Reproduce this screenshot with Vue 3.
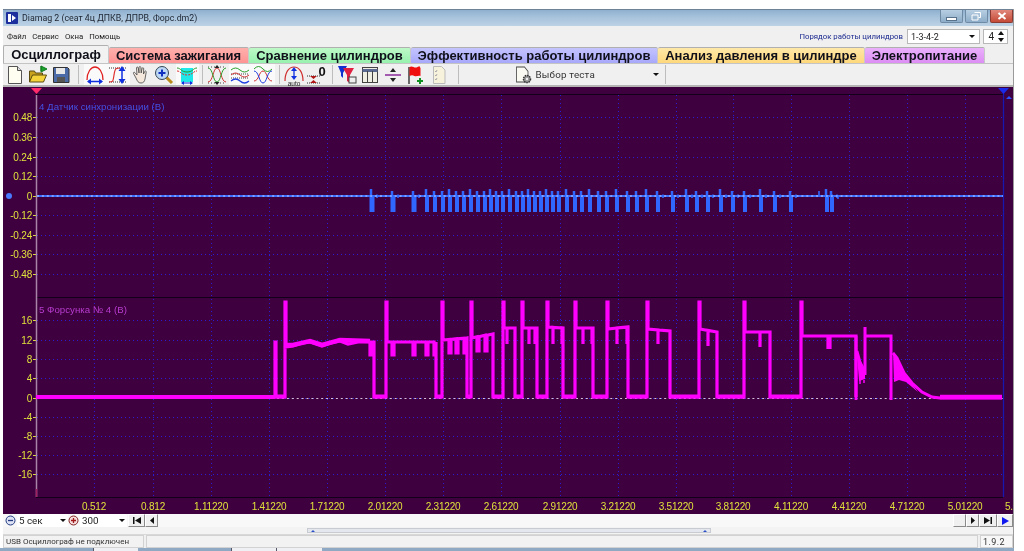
<script setup>
const vGrid = [94,153,211,269,327,385,443,501,560,618,676,733,791,849,907,965]
const xLabels = ['0.512','0.812','1.11220','1.41220','1.71220','2.01220','2.31220','2.61220','2.91220','3.21220','3.51220','3.81220','4.11220','4.41220','4.71220','5.01220']
const yTop = [[117,'0.48'],[137,'0.36'],[157,'0.24'],[176,'0.12'],[196,'0'],[215,'-0.12'],[235,'-0.24'],[254,'-0.36'],[274,'-0.48']]
const yBot = [[320,'16'],[340,'12'],[359,'8'],[378,'4'],[398,'0'],[417,'-4'],[436,'-8'],[455,'-12'],[474,'-16']]

const spikes = [372,393,414,427,435,443,450,457,464,471,478,485,491,497,503,510,517,523,529,535,541,547,553,559,567,575,582,590,599,607,617,628,637,647,658,673,687,697,708,721,733,745,761,775,791,827,832]
const spikeDown = spikes.slice(3).map(x => `M${x} 196V212`).join('')
const wideDown = spikes.slice(0, 3).map(x => `M${x} 196V212`).join('')
const spikeUp = spikes.map((x, i) => `M${x - 1} 196V${i % 3 === 0 ? 189 : 191}`).join('')
const blips = spikes.filter(x => x < 425 || x > 650).map(x => `M${x + 5} 194.500V198`).join('') + 'M819 191V197M838 196V199'

const pulses = [
  [386,436,342,342,355,[393,414,427,435]],
  [442,467,340,338,353,[450,457,465]],
  [471,493,338,334,351,[478,486]],
  [503,515,328,328,344,[507]],
  [522,537,328,328,344,[529,535]],
  [547,563,327,328,344,[553,562]],
  [575,593,328,328,344,[583,592]],
  [607,628,329,327,344,[617,627]],
  [647,670,329,331,344,[658]],
  [699,717,329,332,346,[708]],
  [744,770,332,332,347,[760]],
  [801,856,336,336,349,[828,830]]
]
let d = 'M36 397L275 397V342H276V397H285V302H286V347L293 346L302 343L310 342L322 346L331 343L340 341L348 344L358 342L370 342V355H372V342L374 342V397H386'
let b = 'M275 396.500H285M374 396.500H386'
pulses.forEach((p, i) => {
  const [x, end, t0, t1, dy, drops] = p
  const half = x < 500 ? 1 : 0
  d += `V302H${x + 1}V${t0}`
  drops.forEach(c => {
    const t = t0 + (t1 - t0) * (c - x) / (end - x)
    d += `L${c - half} ${t.toFixed(1)}V${dy}H${c + half}V${t.toFixed(1)}`
  })
  d += `L${end} ${t1}V397`
  const next = pulses[i + 1]
  if (next) {
    d += `H${next[0]}`
    b += `M${end} 396.500H${next[0]}`
  }
})
const magenta = d
const baseline = b
</script>

<template>
  <div class="screen">
    <div class="window">
      <header class="titlebar">
        <svg class="appicon" width="12" height="12" viewBox="0 0 12 12"><rect width="12" height="12" rx="1" fill="#1c2f9c"/><path d="M2 2h3v8H2zM6 3l4 3-4 3z" fill="#fff"/></svg>
        <span class="title">Diamag 2 (сеат 4ц ДПКВ, ДПРВ, Форс.dm2)</span>
        <div class="winbtns">
          <span class="wb min"><i></i></span>
          <span class="wb max"><svg width="11" height="9" viewBox="0 0 11 9"><path d="M3.500.5h6v5h-2M1 3h6v5H1z" fill="none" stroke="#fff"/></svg></span>
          <span class="wb close"><svg width="10" height="8" viewBox="0 0 10 8"><path d="M1.500 1l7 6M8.500 1l-7 6" stroke="#fff" stroke-width="2"/></svg></span>
        </div>
      </header>

      <div class="menubar">
        <nav class="menu"><span>Файл</span><span>Сервис</span><span>Окна</span><span>Помощь</span></nav>
        <div class="order">
          <span class="orderlabel">Порядок работы цилиндров</span>
          <span class="combo ordercombo"><span>1-3-4-2</span><i class="arrow"></i></span>
          <span class="combo spin"><span>4</span><svg width="6" height="11" viewBox="0 0 6 11"><path d="M0 4h6L3 0zM0 7h6l-3 4z" fill="#111"/></svg></span>
        </div>
      </div>

      <div class="tabs">
        <span class="tab t1">Осциллограф</span>
        <span class="tab t2">Система зажигания</span>
        <span class="tab t3">Сравнение цилиндров</span>
        <span class="tab t4">Эффективность работы цилиндров</span>
        <span class="tab t5">Анализ давления в цилиндре</span>
        <span class="tab t6">Электропитание</span>
      </div>

      <div class="toolbar">
        <span class="tb"><svg viewBox="0 0 20 20"><path d="M3.500 1.500h9l4 4v13h-13z" fill="#fffef0" stroke="#555"/><path d="M12.500 1.500v4h4" fill="#ddd" stroke="#555"/></svg></span>
        <span class="tb"><svg viewBox="0 0 20 20"><path d="M1.500 17V6h5l1 2h7v3" fill="#c9a21e" stroke="#5a4a10"/><path d="M1.500 17l3-7h14l-3 7z" fill="#f4d33a" stroke="#5a4a10"/><path d="M13 1v5M13 1l6 3-6 3z" fill="#1aa52e" stroke="#127a20"/></svg></span>
        <span class="tb"><svg viewBox="0 0 20 20"><path d="M2.500 2.500h14l1.500 1.500v13.500h-15.500z" fill="#4a6aa8" stroke="#333"/><rect x="5" y="3" width="9" height="6" fill="#e8e8e8"/><rect x="6" y="12" width="8" height="5" fill="#555"/></svg></span>
        <span class="sep s11"></span>
        <span class="tb on"><svg viewBox="0 0 20 20"><path d="M2 15C2 7 6 2 10 2s8 5 8 13" fill="none" stroke="#e02020" stroke-width="1.300"/><path d="M3 16.500h14" stroke="#1030e0" stroke-width="1.500"/><path d="M2 16.500l4-3v6zM18 16.500l-4-3v6z" fill="#1030e0"/></svg></span>
        <span class="tb on"><svg viewBox="0 0 20 20"><path d="M1 3h18" stroke="#333" stroke-dasharray="1 1"/><path d="M1 17h18" stroke="#333" stroke-dasharray="1 1"/><path d="M1 17c4 0 4 0 5-7s2-7 6-7" fill="none" stroke="#e03030" stroke-width="1.200"/><path d="M14 4v12" stroke="#1030e0" stroke-width="1.500"/><path d="M14 1l-3.500 5h7zM14 19l-3.500-5h7z" fill="#1030e0"/></svg></span>
        <span class="tb"><svg viewBox="0 0 20 20"><path d="M5 13L2.500 8.500c-.6-1 .7-1.700 1.400-.9L6 10 5.500 3c0-1.300 1.600-1.300 1.800 0L8 8V2.500c0-1.300 1.800-1.300 1.900 0L10.200 8l.8-4.500c.3-1.200 1.800-1 1.700.3L12.500 9l1.200-2.500c.5-1 1.800-.5 1.500.6L14 14c-.5 2.500-1.500 4-4 4-2.800 0-3.800-2-5-5z" fill="#f4e8dc" stroke="#444" stroke-width=".8"/></svg></span>
        <span class="tb"><svg viewBox="0 0 20 20"><path d="M12 12l6 6" stroke="#b88a1a" stroke-width="3"/><circle cx="8" cy="8" r="6.500" fill="#bcd8f4" stroke="#345"/><path d="M4.500 8h7M8 4.500v7" stroke="#1030c0" stroke-width="2"/></svg></span>
        <span class="tb on"><svg viewBox="0 0 20 20"><rect x="4" y="3" width="12" height="14" fill="#20e8e8"/><path d="M0 3c4 0 4 4 10 4s6-4 10-4" fill="none" stroke="#2a9a2a"/><path d="M0 6c4 0 4 4 10 4s6-4 10-4" fill="none" stroke="#e03030" stroke-dasharray="2 1"/><path d="M5 18h10" stroke="#1030e0"/><path d="M4 18l3-2v4zM16 18l-3-2v4z" fill="#1030e0"/></svg></span>
        <span class="sep s7"></span>
        <span class="tb"><svg viewBox="0 0 20 20"><path d="M1 2h18M1 18h18" stroke="#444" stroke-dasharray="1 2"/><path d="M1 17C6 17 6 3 10 3s4 14 9 14" fill="none" stroke="#d03030"/><path d="M1 3c5 0 5 14 9 14s4-14 9-14" fill="none" stroke="#28a028"/><path d="M10 0l-2.500 3h5zM10 20l-2.500-3h5z" fill="#222"/></svg></span>
        <span class="tb on"><svg viewBox="0 0 20 20"><path d="M1 5q4.500-4 9 0t9 0" fill="none" stroke="#28a028"/><path d="M1 9h18M1 13h18" stroke="#444" stroke-dasharray="1 1"/><path d="M1 10q4.500-4 9 0t9 0" fill="none" stroke="#d03030"/><path d="M1 16q4.500-4 9 0t9 0" fill="none" stroke="#2040e0" stroke-width="1.200"/></svg></span>
        <span class="tb on"><svg viewBox="0 0 20 20"><path d="M1 4q4.500-5 9 0t9 0" fill="none" stroke="#28a028"/><path d="M1 16C6 16 6 6 10 6s4 10 9 10" fill="none" stroke="#d03030"/><path d="M1 6c5 0 5 12 9 12s4-12 9-12" fill="none" stroke="#2040e0"/></svg></span>
        <span class="sep s8"></span>
        <span class="tb"><svg viewBox="0 0 20 20"><path d="M1 16C1 7 5 2 10 2s9 5 9 14" fill="none" stroke="#d03030" stroke-width="1.200"/><path d="M10 4v9" stroke="#1030e0" stroke-width="1.300"/><path d="M10 2l-3 4h6zM10 15l-3-4h6z" fill="#1030e0"/><text x="10" y="20.500" class="auto">auto</text></svg></span>
        <span class="tb"><svg viewBox="0 0 20 20"><path d="M0 11h13M0 18h13" stroke="#333" stroke-dasharray="1 1"/><path d="M3 11h7l-3.500 3zM3 18h7l-3.500-3z" fill="#b01818"/><text x="15" y="11" class="zero">0</text></svg></span>
        <span class="sep s7"></span>
        <span class="tb"><svg viewBox="0 0 20 20"><path d="M1 1h9l-4 7v5l-2-2V8z" fill="#1030d0"/><path d="M6 3h11l-4 7v8l-3-2v-6z" fill="#e02040"/><rect x="12" y="12" width="7" height="6" fill="#eee" stroke="#444"/></svg></span>
        <span class="tb"><svg viewBox="0 0 20 20"><rect x="2.500" y="2.500" width="15" height="15" fill="#f0efe4" stroke="#444"/><path d="M2.500 5.500h15" stroke="#5a6a90" stroke-width="3"/><path d="M7.500 6v11M12.500 6v11" stroke="#444"/></svg></span>
        <span class="tb"><svg viewBox="0 0 20 20"><path d="M2 10h16" stroke="#8a2a9a" stroke-width="1.500"/><path d="M10 3l-3 4h6zM10 17l-3-4h6z" fill="#222"/></svg></span>
        <span class="tb"><svg viewBox="0 0 20 20"><path d="M3 19V2" stroke="#222" stroke-width="1.300"/><path d="M3.500 2c3-2 5 2 8 0s2 0 3 1v8c-2-1-4 1-6 0s-3-1-5 0z" fill="#f01010"/><path d="M14 13v6M11 16h6" stroke="#109020" stroke-width="2"/></svg></span>
        <span class="tb"><svg viewBox="0 0 20 20"><path d="M4.500 1.500h8l3.500 3.500v13.500H4.500z" fill="#f6f2dc" stroke="#bbb"/><path d="M6 6l1 1 1-2M6 10l1 1 1-2M6 14l1 1 1-2" fill="none" stroke="#aaa"/></svg></span>
        <span class="sep s7b"></span>
        <div class="testpick">
          <svg width="18" height="19" viewBox="0 0 18 19"><path d="M1.500 1.500h8l3.500 3.500v8H1.500z" transform="scale(1 1.300)" fill="#fbfaf2" stroke="#444" stroke-width=".8"/><circle cx="12" cy="14" r="3.500" fill="#999" stroke="#333" stroke-width="1.500" stroke-dasharray="1.500 .8"/><circle cx="12" cy="14" r="1.200" fill="#eee"/></svg>
          <span class="testlabel">Выбор теста</span>
          <i class="arrow small"></i>
        </div>
        <span class="sep s0"></span>
      </div>

      <div class="plot">
        <svg class="scope" viewBox="3 87 1010 427" width="1010" height="427">
          <rect x="3" y="87" width="1010" height="427" fill="#3e003e"/>
          <g class="grid">
            <path v-for="x in vGrid" :key="x" :d="`M${x + .5} 95V497`"/>
            <path v-for="r in yTop" :key="r[1]" :d="`M37 ${r[0] + .5}H1003`"/>
            <path v-for="r in yBot" :key="r[1]" :d="`M37 ${r[0] + .5}H1003`"/>
          </g>
          <path d="M36 94.500H1003M36 297.500H1003M36 497.500H1003" stroke="#12001a" stroke-width="1" fill="none"/>
          <g class="ticks">
            <path v-for="r in yTop" :key="r[1]" :d="`M33 ${r[0] + .5}H36`"/>
            <path v-for="r in yBot" :key="r[1]" :d="`M33 ${r[0] + .5}H36`"/>
          </g>
          <path d="M36.500 95V497" stroke="#a884a8" stroke-width="1.500"/>
          <path d="M36.500 489V497" stroke="#a02060" stroke-width="1.500"/>
          <path d="M1003.500 92V497" stroke="#1818b0" stroke-width="1.300"/>
          <path d="M31 88h11l-5.500 6z" fill="#ff2a6a"/>
          <path d="M998 88h11l-5.500 6z" fill="#1a2ae8"/>
          <path d="M1006 99h6l-3-3z" fill="#2a50ff"/>
          <circle cx="9" cy="196" r="3" fill="#4a7aff"/>

          <text v-for="r in yTop" :key="r[1]" :x="32" :y="r[0] + 3.500" class="ylab">{{ r[1] }}</text>
          <text v-for="r in yBot" :key="r[1]" :x="32" :y="r[0] + 3.500" class="ylab">{{ r[1] }}</text>
          <text v-for="(l, i) in xLabels" :key="l" :x="vGrid[i]" y="509.500" class="xlab">{{ l }}</text>
          <text x="1005" y="509.500" class="xlab start">5.</text>

          <text x="39" y="110" class="name blue">4 Датчик синхронизации (В)</text>
          <text x="39" y="313" class="name pink">5 Форсунка № 4 (В)</text>

          <path d="M37 196H1003" stroke="#3a6cff" stroke-width="2.200"/>
          <path :d="wideDown" stroke="#3068ff" stroke-width="5" fill="none"/>
          <path :d="spikeDown" stroke="#3068ff" stroke-width="4" fill="none"/>
          <path :d="spikeUp" stroke="#3068ff" stroke-width="2.500" fill="none"/>
          <path :d="blips" stroke="#3068ff" stroke-width="1.600" fill="none"/>
          <path d="M37 196H1003" stroke="#c4d4ff" stroke-dasharray="2 2.900" fill="none"/>

          <path d="M37 398.500H1003" stroke="#d8c0d8" stroke-dasharray="2 2.900"/>
          <path :d="magenta" stroke="#ff00ff" stroke-width="3.200" fill="none" stroke-linejoin="miter"/>
          <path :d="baseline" stroke="#ff00ff" stroke-width="4" fill="none"/>
          <path d="M36 397H275" stroke="#ff00ff" stroke-width="3.800" fill="none"/>
          <path d="M285 345L293 345L310 341L322 345L340 340L370 341" stroke="#ff00ff" stroke-width="4.500" fill="none"/>
          <path d="M856 336V400M857 351L860 362L865 372" stroke="#ff00ff" stroke-width="2.800" fill="none"/>
          <path d="M857 355L859 381L865 379L865 370z" fill="#ff00ff"/>
          <path d="M860 380V384M864 380V383" stroke="#ff00ff" stroke-width="1.500"/>
          <path d="M865 375V327M866 336H891V400" stroke="#ff00ff" stroke-width="3" fill="none"/>
          <path d="M893 353L897 358L904 373L912 383L922 392L932 397L940 398H1002" stroke="#ff00ff" stroke-width="3" fill="none"/>
          <path d="M893 352L894 382L899 380L906 382L918 392L904 373z" fill="#ff00ff"/>
          <path d="M940 397H1002" stroke="#ff00ff" stroke-width="4.500" fill="none"/>
        </svg>
      </div>

      <div class="controls">
        <svg class="round" width="11" height="11" viewBox="0 0 11 11"><circle cx="5.500" cy="5.500" r="4.500" fill="#dde3f5" stroke="#223a80"/><path d="M3 5.500h5" stroke="#223a80" stroke-width="1.300"/></svg>
        <span class="ctlcombo c1"><span>5 сек</span><i class="arrow"></i></span>
        <svg class="round" width="11" height="11" viewBox="0 0 11 11"><circle cx="5.500" cy="5.500" r="4.500" fill="#f5dddd" stroke="#802222"/><path d="M3 5.500h5M5.500 3v5" stroke="#a01818" stroke-width="1.300"/></svg>
        <span class="ctlcombo c2"><span>300</span><i class="arrow"></i></span>
        <span class="nav n1"><svg width="8" height="7" viewBox="0 0 8 7"><path d="M0 0h1.500v7H0zM8 0v7L2 3.500z" fill="#111"/></svg></span>
        <span class="nav n2"><svg width="4" height="7" viewBox="0 0 4 7"><path d="M4 0v7L0 3.500z" fill="#111"/></svg></span>
        <span class="fill"></span>
        <span class="nav n3"></span>
        <span class="nav n2"><svg width="4" height="7" viewBox="0 0 4 7"><path d="M0 0v7l4-3.500z" fill="#111"/></svg></span>
        <span class="nav n4"><svg width="8" height="7" viewBox="0 0 8 7"><path d="M0 0v7l6-3.500zM6.500 0H8v7H6.500z" fill="#111"/></svg></span>
        <span class="nav n5"><svg width="7" height="8" viewBox="0 0 7 8"><path d="M0 0v8l7-4z" fill="#1018f0"/></svg></span>
      </div>

      <div class="scrollrow">
        <span class="thumb"><i class="up"></i><i class="up"></i></span>
      </div>

      <footer class="status">
        <span class="pane p1">USB Осциллограф не подключен</span>
        <span class="pane p2"></span>
        <span class="pane p3">1.9.2</span>
      </footer>
    </div>
    <div class="taskbar">
      <span class="task w1"></span><span class="task light w2"></span><span class="task w3"></span><span class="task light w4"></span><span class="task light w5"></span><span class="task w6"></span>
    </div>
  </div>
</template>

<style>
html, body { margin: 0; background: #fff; overflow: hidden; }
</style>

<style scoped>
.screen {
  width: 1024px; height: 551px; background: #fff; box-sizing: border-box;
  padding-top: 9px; display: flex; flex-direction: column; overflow: hidden;
  filter: blur(.4px);
  font-family: "Liberation Sans", Arial, sans-serif; color: #222;
}
.window {
  width: 1011px; margin-left: 3px; height: 539px; box-sizing: border-box;
  background: #f0f0f0; display: flex; flex-direction: column; flex: none;
  border-right: 1px solid #9a9a9a;
}
.titlebar {
  height: 16px; flex: none; display: flex; align-items: center; padding-left: 2px;
  background: linear-gradient(#8fb0cf 0, #a5c1da 40%, #bdd2e5 100%);
  border-top: 1px solid #6f8296;
}
.appicon { margin-left: 1px; }
.title { margin-left: 4px; font: 8.800px Roboto, sans-serif; color: #1c2430; white-space: nowrap; }
.winbtns { margin-left: auto; display: flex; gap: 2px; height: 13px; align-self: flex-start; }
.wb { height: 13px; box-sizing: border-box; display: flex; align-items: center; justify-content: center; border: 1px solid #6f8aa4; border-radius: 0 0 2px 2px; border-top: 0; }
.min, .max { width: 23px; background: linear-gradient(#b8cfe2, #8eadc9); }
.close { width: 23px; background: linear-gradient(#e0867a, #c44a36); border-color: #8a3a30; }
.min i { width: 9px; height: 2px; background: #fff; border: 1px solid #58728c; margin-top: 5px; }
.menubar { height: 21px; flex: none; display: flex; align-items: center; background: #f0f0f0; }
.menu { display: flex; gap: 6px; padding-left: 4px; font: 7.800px Roboto, sans-serif; color: #222; }
.order { margin-left: auto; display: flex; align-items: center; margin-right: 5px; }
.orderlabel { font: 7.800px Roboto, sans-serif; color: #1c2a90; margin-right: 4px; white-space: nowrap; }
.combo { height: 15px; box-sizing: border-box; background: #fff; border: 1px solid #b8b8b8; display: flex; align-items: center; font: 9px Roboto, sans-serif; padding: 0 3px; color: #222; }
.ordercombo { width: 73px; justify-content: space-between; padding-right: 4px; }
.spin { width: 25px; margin-left: 3px; justify-content: flex-end; gap: 4px; font-size: 10px; }
.arrow { width: 0; height: 0; border: 3px solid transparent; border-top: 3.500px solid #111; border-bottom: 0; display: block; }
.arrow.small { margin-left: auto; margin-right: 6px; }
.tabs { height: 16px; flex: none; display: flex; align-items: flex-end; }
.tab {
  height: 16px; box-sizing: border-box; display: flex; align-items: center; justify-content: center;
  padding-bottom: 1px;
  font: bold 13px "Liberation Sans", sans-serif; color: #10101a; white-space: nowrap;
  border-top: 1px solid #b0b0b0; border-right: 1px solid #c8c8c8; border-radius: 2px 2px 0 0;
}
.t1 { width: 106px; background: #f2f2f2; height: 18px; border-left: 1px solid #b0b0b0; }
.t2 { width: 140px; background: linear-gradient(#ffb0ac, #ff9494); }
.t3 { width: 162px; background: linear-gradient(#bdf9c8, #98f2ae); }
.t4 { width: 247px; background: linear-gradient(#c4c4ff, #a8a8fa); }
.t5 { width: 207px; background: linear-gradient(#ffe8a8, #ffd87c); }
.t6 { width: 120px; background: linear-gradient(#eab0fb, #dc8ef4); }
.toolbar {
  flex: none; display: flex; align-items: center; padding-left: .5px;
  background: #f0f0f0; border-bottom: 2px solid #b4b4b4; border-top: 1px solid #c4c4c4;
  height: 21px;
}
.tb { width: 23px; height: 21px; flex: none; display: flex; align-items: center; justify-content: center; box-sizing: border-box; }
.tb svg { width: 20px; height: 20px; overflow: visible; }
.tb.on { background: #fafafa; }
.auto { font: 6.500px "Liberation Sans", sans-serif; text-anchor: middle; fill: #222; }
.zero { font: bold 13px "Liberation Sans", sans-serif; text-anchor: middle; fill: #111; }
.sep { flex: none; position: relative; display: block; height: 21px; }
.sep::after { content: ""; position: absolute; left: 50%; top: 1px; bottom: 1px; width: 1px; background: #bdbdbd; }
.s11 { width: 11px; } .s7 { width: 7px; } .s8 { width: 8px; } .s7b { width: 15px; } .s0 { width: 1px; }
.testpick { width: 199px; box-sizing: border-box; display: flex; align-items: center; padding-left: 49px; height: 21px; }
.testlabel { font: 9.800px Roboto, sans-serif; color: #333; margin-left: 3px; letter-spacing: .2px; }
.plot { height: 427px; flex: none; background: #3e003e; }
.scope { display: block; }
.grid path { stroke: #2a1cd0; stroke-dasharray: 1 3; fill: none; }
.ticks path { stroke: #d8d83a; fill: none; }
.ylab { font: 10px "Liberation Sans", sans-serif; letter-spacing: -.2px; fill: #e0e03c; text-anchor: end; }
.xlab { font: 10px "Liberation Sans", sans-serif; letter-spacing: -.2px; fill: #e0e03c; text-anchor: middle; }
.xlab.start { text-anchor: start; }
.name { font: 9.700px "Liberation Sans", sans-serif; }
.blue { fill: #4450e4; }
.pink { fill: #b83cd0; }
.controls { height: 13px; flex: none; display: flex; align-items: center; background: #f8f8f8; padding-left: 2px; }
.round { flex: none; }
.ctlcombo { display: flex; align-items: center; justify-content: space-between; font: 9.800px Roboto, sans-serif; color: #222; padding: 0 2px; box-sizing: border-box; background: #fff; height: 13px; margin-left: 1px; }
.c1 { width: 51px; } .c2 { width: 47px; margin-right: 1px; }
.nav { height: 13px; box-sizing: border-box; display: flex; align-items: center; justify-content: center; background: #f0f0f0; border-right: 1px solid #8a8a8a; border-bottom: 1px solid #8a8a8a; border-top: 1px solid #fff; border-left: 1px solid #fff; flex: none; }
.n1 { width: 17px; } .n2 { width: 13px; } .n3 { width: 13px; } .n4 { width: 18px; } .n5 { width: 16px; }
.fill { flex: 1; }
.scrollrow { height: 7px; flex: none; background: #f3f3f3; display: flex; padding-left: 304px; border-bottom: 1px solid #d8d8d8; }
.thumb { width: 404px; height: 5px; margin-top: 1px; background: #e4e8ee; border: 1px solid #c8ccd2; box-sizing: border-box; display: flex; justify-content: space-between; align-items: center; padding: 0 3px; }
.up { width: 0; height: 0; border: 2px solid transparent; border-bottom: 2px solid #2a50c8; border-top: 0; }
.status { height: 13px; flex: none; display: flex; gap: 2px; background: #f0f0f0; }
.pane { height: 13px; box-sizing: border-box; border: 1px solid #d2d2d2; display: flex; align-items: center; font: 8px Roboto, sans-serif; color: #333; padding-left: 2px; background: #f2f2f2; white-space: nowrap; }
.p1 { width: 141px; } .p2 { flex: 1; } .p3 { width: 33px; background: #f8f8f8; letter-spacing: .4px; font-size: 9px; }
.taskbar { flex: 1; display: flex; width: 1014px; background: #8fa8c4; }
.task { height: 3px; display: block; }
.light { background: #eef0f4; border-left: 1px solid #556; }
.w1 { width: 93px; } .w2 { width: 44px; } .w3 { width: 93px; } .w4 { width: 44px; } .w5 { width: 45px; } .w6 { flex: 1; }
</style>
